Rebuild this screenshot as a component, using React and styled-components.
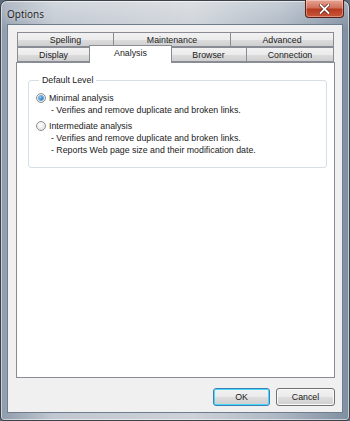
import React from "react";
import styled, { createGlobalStyle } from "styled-components";

const GlobalStyle = createGlobalStyle`
  html, body {
    margin: 0;
    padding: 0;
    background: #5d6b7a;
  }
  body {
    font-family: "Liberation Sans", Arial, sans-serif;
  }
`;

const Window = styled.div`
  box-sizing: border-box;
  width: 350px;
  height: 421px;
  display: flex;
  flex-direction: column;
  padding: 0 6px 7px 6px;
  border: 1px solid #3c4148;
  border-radius: 7px 7px 4px 4px;
  background:
    linear-gradient(180deg, rgba(255, 255, 255, 0.3) 0%, rgba(255, 255, 255, 0) 30px),
    linear-gradient(90deg, #8f9cac 0%, #c0c7d0 15%, #cdd2d8 55%, #aeb8c4 80%, #7f8ea1 100%);
  box-shadow: inset 0 0 0 1px rgba(255, 255, 255, 0.55);
`;

const TitleBar = styled.div`
  height: 25px;
  display: flex;
  align-items: flex-start;
  justify-content: space-between;
`;

const Title = styled.span`
  margin-top: 6px;
  font-family: "Open Sans", "Liberation Sans", sans-serif;
  font-size: 10px;
  color: #1b1b1b;
  text-shadow: 0 0 6px rgba(255, 255, 255, 0.9);
`;

const CloseButton = styled.button`
  width: 39px;
  height: 18px;
  margin-top: -1px;
  margin-right: -1px;
  padding: 0;
  border: 1px solid #5a1d14;
  border-top: none;
  border-radius: 0 0 4px 4px;
  background: linear-gradient(180deg, #e9a493 0%, #d0715c 45%, #b73a20 55%, #c8563a 100%);
  box-shadow: inset 0 0 0 1px rgba(255, 255, 255, 0.35);
  display: flex;
  align-items: center;
  justify-content: center;
`;

const Client = styled.div`
  flex: 1;
  display: flex;
  flex-direction: column;
  background: #f0f0f0;
  border: 1px solid #6f7c8b;
  padding: 7px 7px 6px 8px;
`;

const TabRow = styled.div`
  display: flex;
  height: 15px;
  padding-left: ${(p) => p.$indent}px;
`;

const Tab = styled.div`
  box-sizing: border-box;
  width: ${(p) => p.$w}px;
  height: ${(p) => (p.$active ? 18 : 15)}px;
  margin: ${(p) => (p.$active ? "-2px -1px -1px -1px" : "0")};
  position: relative;
  z-index: ${(p) => (p.$active ? 2 : 1)};
  border: 1px solid #898c95;
  border-bottom: ${(p) => (p.$active ? "none" : "1px solid #898c95")};
  border-left-width: ${(p) => (p.$first || p.$active ? 1 : 0)}px;
  background: ${(p) =>
    p.$active ? "#ffffff" : "linear-gradient(180deg, #f2f2f2 0%, #ebebeb 50%, #dddddd 51%, #cfcfcf 100%)"};
  font-size: 8.8px;
  color: #1a1a1a;
  text-align: center;
  line-height: 15px;
`;

const Pane = styled.div`
  box-sizing: border-box;
  height: 316px;
  background: #ffffff;
  border: 1px solid #898c95;
  padding: 12px 7px 0 11px;
`;

const Group = styled.fieldset`
  margin: 0;
  padding: 3px 0 11px 7px;
  border: 1px solid #d5dfe5;
  border-radius: 3px;
  box-shadow: inset 1px 1px 0 #ffffff;
`;

const Legend = styled.legend`
  padding: 0 3px;
  margin-left: 3px;
  font-size: 8.8px;
  color: #1a1a1a;
`;

const Option = styled.div`
  display: flex;
  align-items: center;
  gap: 3px;
  height: 12px;
  font-size: 8.8px;
  color: #1a1a1a;
  margin-top: ${(p) => p.$gap}px;
`;

const Radio = styled.span`
  box-sizing: border-box;
  width: 10px;
  height: 10px;
  border-radius: 50%;
  border: 1px solid #8e8f8f;
  background: radial-gradient(circle at 40% 35%, #ffffff 0%, #e6e6e6 70%, #cfcfcf 100%);
  display: flex;
  align-items: center;
  justify-content: center;
  &::after {
    content: "";
    display: ${(p) => (p.$checked ? "block" : "none")};
    width: 4px;
    height: 4px;
    border-radius: 50%;
    background: radial-gradient(circle at 35% 35%, #8ad0ff 0%, #1a6cb8 70%, #11427a 100%);
    box-shadow: 0 0 0 1px #6aa6d8;
  }
`;

const Detail = styled.div`
  font-size: 8.8px;
  color: #1a1a1a;
  height: 12px;
  line-height: 13px;
  padding-left: 15px;
`;

const ButtonBar = styled.div`
  display: flex;
  justify-content: flex-end;
  gap: 6px;
  margin-top: 10px;
`;

const Button = styled.button`
  box-sizing: border-box;
  width: ${(p) => p.$w}px;
  height: 18px;
  padding: 0;
  border-radius: 3px;
  border: 1px solid ${(p) => (p.$default ? "#3c7fb1" : "#707070")};
  background: linear-gradient(180deg, #f2f2f2 0%, #ebebeb 48%, #dddddd 52%, #cfcfcf 100%);
  box-shadow: inset 0 0 0 1px ${(p) => (p.$default ? "#48d8fb" : "#fbfbfb")};
  font-family: "Liberation Sans", Arial, sans-serif;
  font-size: 8.8px;
  color: #1a1a1a;
`;

const topTabs = [
  { label: "Spelling", w: 97 },
  { label: "Maintenance", w: 117 },
  { label: "Advanced", w: 103 },
];

const bottomTabs = [
  { label: "Display", w: 73 },
  { label: "Analysis", w: 81, active: true },
  { label: "Browser", w: 76 },
  { label: "Connection", w: 87 },
];

export default function App() {
  return (
    <>
      <GlobalStyle />
      <Window>
        <TitleBar>
          <Title>Options</Title>
          <CloseButton aria-label="Close">
            <svg width="11" height="10" viewBox="0 0 11 10">
              <path d="M1.5 1 L9.5 9 M9.5 1 L1.5 9" stroke="#5a1d14" strokeWidth="3.2" strokeLinecap="square" />
              <path d="M1.5 1 L9.5 9 M9.5 1 L1.5 9" stroke="#ffffff" strokeWidth="1.8" strokeLinecap="square" />
            </svg>
          </CloseButton>
        </TitleBar>
        <Client>
          <TabRow $indent={1}>
            {topTabs.map((t, i) => (
              <Tab key={t.label} $w={t.w} $first={i === 0}>
                {t.label}
              </Tab>
            ))}
          </TabRow>
          <TabRow $indent={1}>
            {bottomTabs.map((t, i) => (
              <Tab key={t.label} $w={t.active ? t.w + 2 : t.w} $first={i === 0} $active={t.active}>
                {t.label}
              </Tab>
            ))}
          </TabRow>
          <Pane>
            <Group>
              <Legend>Default Level</Legend>
              <Option $gap={4}>
                <Radio $checked />
                Minimal analysis
              </Option>
              <Detail>- Verifies and remove duplicate and broken links.</Detail>
              <Option $gap={4}>
                <Radio />
                Intermediate analysis
              </Option>
              <Detail>- Verifies and remove duplicate and broken links.</Detail>
              <Detail>- Reports Web page size and their modification date.</Detail>
            </Group>
          </Pane>
          <ButtonBar>
            <Button $w={57} $default>OK</Button>
            <Button $w={59}>Cancel</Button>
          </ButtonBar>
        </Client>
      </Window>
    </>
  );
}
